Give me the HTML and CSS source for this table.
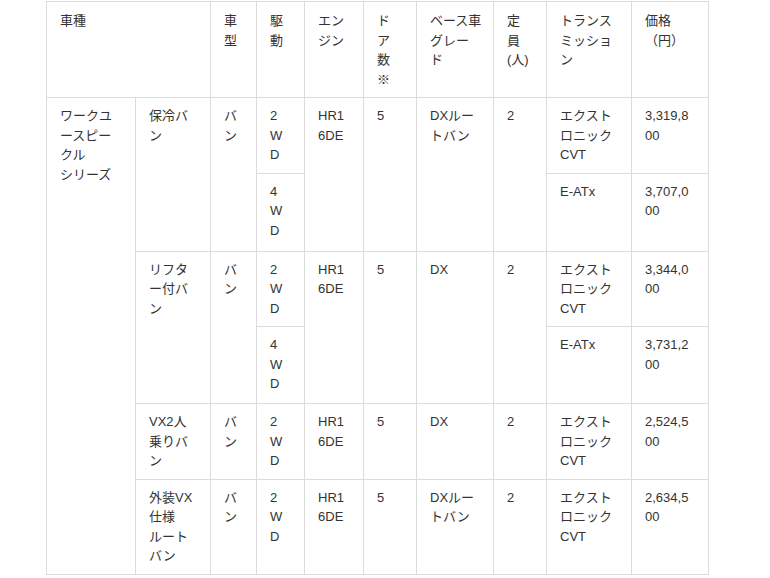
FILE: index.html
```html
<!DOCTYPE html>
<html lang="ja">
<head>
<meta charset="utf-8">
<link rel="stylesheet" href="styles.css">
</head>
<body>
<table class="spec">
  <colgroup>
    <col class="w89"><col class="w75"><col class="w46"><col class="w48"><col class="w59">
    <col class="w53"><col class="w77"><col class="w53"><col class="w85"><col class="w77">
  </colgroup>
  <thead>
    <tr>
      <th colspan="2">車種</th>
      <th>車<br>型</th>
      <th>駆<br>動</th>
      <th>エン<br>ジン</th>
      <th>ド<br>ア<br>数<br>※</th>
      <th>ベース車<br>グレー<br>ド</th>
      <th>定<br>員<br>(人)</th>
      <th>トランス<br>ミッショ<br>ン</th>
      <th>価格<br>（円）</th>
    </tr>
  </thead>
  <tbody>
    <tr>
      <td rowspan="6">ワークユ<br>ースピー<br>クル<br>シリーズ</td>
      <td rowspan="2">保冷バ<br>ン</td>
      <td rowspan="2">バ<br>ン</td>
      <td>2<br>W<br>D</td>
      <td rowspan="2">HR1<br>6DE</td>
      <td rowspan="2">5</td>
      <td rowspan="2">DXルー<br>トバン</td>
      <td rowspan="2">2</td>
      <td>エクスト<br>ロニック<br>CVT</td>
      <td>3,319,8<br>00</td>
    </tr>
    <tr class="sub-a">
      <td>4<br>W<br>D</td>
      <td>E-ATx</td>
      <td>3,707,0<br>00</td>
    </tr>
    <tr>
      <td rowspan="2">リフタ<br>ー付バ<br>ン</td>
      <td rowspan="2">バ<br>ン</td>
      <td>2<br>W<br>D</td>
      <td rowspan="2">HR1<br>6DE</td>
      <td rowspan="2">5</td>
      <td rowspan="2">DX</td>
      <td rowspan="2">2</td>
      <td>エクスト<br>ロニック<br>CVT</td>
      <td>3,344,0<br>00</td>
    </tr>
    <tr class="sub-b">
      <td>4<br>W<br>D</td>
      <td>E-ATx</td>
      <td>3,731,2<br>00</td>
    </tr>
    <tr>
      <td>VX2人<br>乗りバ<br>ン</td>
      <td>バ<br>ン</td>
      <td>2<br>W<br>D</td>
      <td>HR1<br>6DE</td>
      <td>5</td>
      <td>DX</td>
      <td>2</td>
      <td>エクスト<br>ロニック<br>CVT</td>
      <td>2,524,5<br>00</td>
    </tr>
    <tr>
      <td>外装VX<br>仕様<br>ルート<br>バン</td>
      <td>バ<br>ン</td>
      <td>2<br>W<br>D</td>
      <td>HR1<br>6DE</td>
      <td>5</td>
      <td>DXルー<br>トバン</td>
      <td>2</td>
      <td>エクスト<br>ロニック<br>CVT</td>
      <td>2,634,5<br>00</td>
    </tr>
  </tbody>
</table>
</body>
</html>
```
FILE: styles.css
```css
html, body {
  margin: 0;
  padding: 0;
  background: #fff;
}

body {
  font-family: "Liberation Sans", "Noto Sans CJK JP", sans-serif;
  font-size: 13px;
  line-height: 19.5px;
  color: #333;
}

.spec {
  margin: 1px 0 0 46px;
  border-collapse: collapse;
  table-layout: fixed;
  width: 663px;
}

.spec th,
.spec td {
  border: 1px solid #dcdcdc;
  padding: 8px 13px;
  text-align: left;
  vertical-align: top;
  font-weight: normal;
  white-space: nowrap;
}

.spec th {
  padding-top: 9px;
}

.spec .sub-a td {
  padding-bottom: 10.5px;
}

.spec .sub-b td {
  padding-bottom: 9.5px;
}

.w89 { width: 89px; }
.w75 { width: 75px; }
.w46 { width: 46px; }
.w48 { width: 48px; }
.w59 { width: 59px; }
.w53 { width: 53px; }
.w77 { width: 77px; }
.w85 { width: 85px; }
```
